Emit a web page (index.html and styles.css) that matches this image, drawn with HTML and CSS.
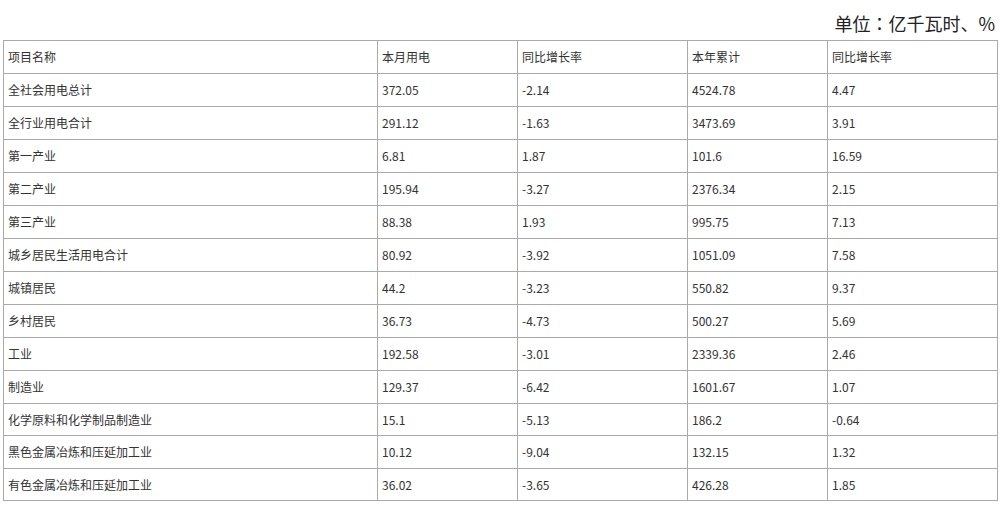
FILE: index.html
```html
<!DOCTYPE html>
<html lang="zh-CN">
<head>
<meta charset="utf-8">
<title>用电统计</title>
<link rel="stylesheet" href="styles.css">
</head>
<body>
<div class="page">
  <div class="unit" lang="ja">单位：亿千瓦时、%</div>
  <table class="data">
    <colgroup>
      <col class="c1"><col class="c2"><col class="c3"><col class="c4"><col class="c5">
    </colgroup>
    <tbody>
      <tr><td>项目名称</td><td>本月用电</td><td>同比增长率</td><td>本年累计</td><td>同比增长率</td></tr>
      <tr><td>全社会用电总计</td><td>372.05</td><td>-2.14</td><td>4524.78</td><td>4.47</td></tr>
      <tr><td>全行业用电合计</td><td>291.12</td><td>-1.63</td><td>3473.69</td><td>3.91</td></tr>
      <tr><td>第一产业</td><td>6.81</td><td>1.87</td><td>101.6</td><td>16.59</td></tr>
      <tr><td>第二产业</td><td>195.94</td><td>-3.27</td><td>2376.34</td><td>2.15</td></tr>
      <tr><td>第三产业</td><td>88.38</td><td>1.93</td><td>995.75</td><td>7.13</td></tr>
      <tr><td>城乡居民生活用电合计</td><td>80.92</td><td>-3.92</td><td>1051.09</td><td>7.58</td></tr>
      <tr><td>城镇居民</td><td>44.2</td><td>-3.23</td><td>550.82</td><td>9.37</td></tr>
      <tr><td>乡村居民</td><td>36.73</td><td>-4.73</td><td>500.27</td><td>5.69</td></tr>
      <tr><td>工业</td><td>192.58</td><td>-3.01</td><td>2339.36</td><td>2.46</td></tr>
      <tr><td>制造业</td><td>129.37</td><td>-6.42</td><td>1601.67</td><td>1.07</td></tr>
      <tr class="tight"><td>化学原料和化学制品制造业</td><td>15.1</td><td>-5.13</td><td>186.2</td><td>-0.64</td></tr>
      <tr><td>黑色金属冶炼和压延加工业</td><td>10.12</td><td>-9.04</td><td>132.15</td><td>1.32</td></tr>
      <tr class="tight"><td>有色金属冶炼和压延加工业</td><td>36.02</td><td>-3.65</td><td>426.28</td><td>1.85</td></tr>
    </tbody>
  </table>
</div>
</body>
</html>
```

FILE: styles.css
```css
html, body {
  margin: 0;
  padding: 0;
  background: #ffffff;
}
body {
  font-family: "Noto Sans CJK SC", "Noto Sans", sans-serif;
  color: #333333;
}
.page {
  width: 1000px;
}
.unit {
  box-sizing: border-box;
  height: 40px;
  padding: 10px 5px 0 0;
  font-family: "Noto Sans CJK JP", "Noto Sans CJK SC", sans-serif;
  font-size: 18px;
  line-height: 26px;
  text-align: right;
  color: #222222;
}
.data {
  margin-left: 3px;
  border-collapse: collapse;
  table-layout: fixed;
  width: 994px;
  font-size: 12px;
}
.c1 { width: 374px; }
.c2 { width: 140px; }
.c3 { width: 170px; }
.c4 { width: 140px; }
.c5 { width: 170px; }
.data td {
  border: 1px solid #aaaaaa;
  height: 32px;
  padding: 0 0 0 4px;
  line-height: 16px;
  vertical-align: middle;
  white-space: nowrap;
  box-sizing: border-box;
}
.data tr {
  height: 33px;
}
.data tr.tight {
  height: 32px;
}
.data tr.tight td {
  height: 31px;
}
```
